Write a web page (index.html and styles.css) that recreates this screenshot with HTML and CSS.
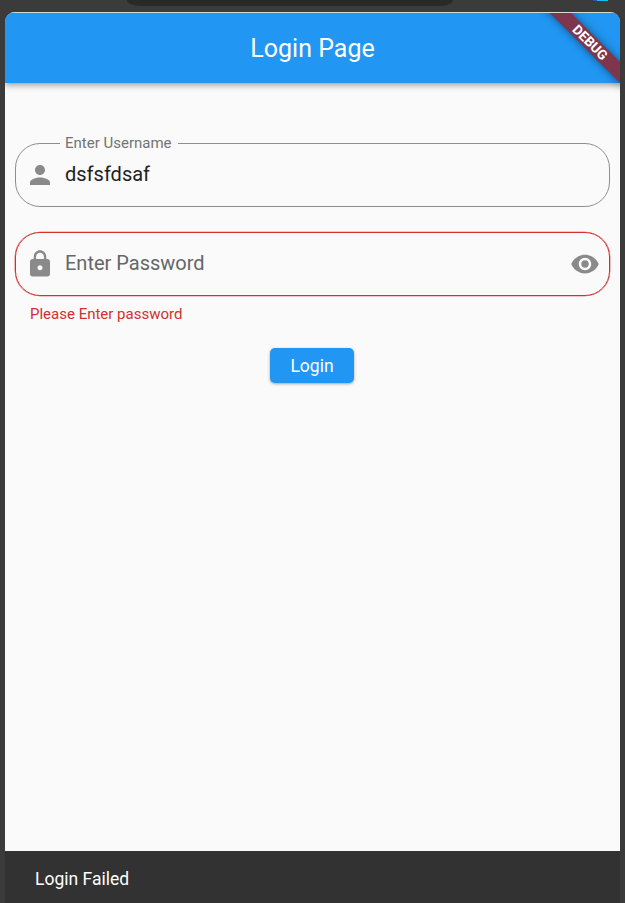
FILE: index.html
```
<!DOCTYPE html>
<html lang="en">
<head>
<meta charset="utf-8">
<title>Login Page</title>
<link rel="stylesheet" href="styles.css">
</head>
<body>
<div class="tabstrip"><span class="tab"></span><span class="tab-icon"></span></div>
<div class="app">
  <header class="appbar">
    <h1 class="title">Login Page</h1>
    <div class="banner-clip"><div class="banner">DEBUG</div></div>
  </header>
  <main class="form">
    <fieldset class="field named">
      <legend class="label">Enter Username</legend>
      <div class="row">
        <svg class="icon" viewBox="0 0 24 24"><path d="M12 12c2.21 0 4-1.79 4-4s-1.79-4-4-4-4 1.79-4 4 1.79 4 4 4zm0 2c-2.67 0-8 1.34-8 4v2h16v-2c0-2.66-5.33-4-8-4z"/></svg>
        <span class="value">dsfsfdsaf</span>
      </div>
    </fieldset>
    <div class="field invalid">
      <div class="row">
        <svg class="icon" viewBox="0 0 24 24"><path d="M18 8h-1V6c0-2.76-2.24-5-5-5S7 3.24 7 6v2H6c-1.1 0-2 .9-2 2v10c0 1.1.9 2 2 2h12c1.1 0 2-.9 2-2V10c0-1.1-.9-2-2-2zm-6 9c-1.1 0-2-.9-2-2s.9-2 2-2 2 .9 2 2-.9 2-2 2zm3.1-9H8.900V6c0-1.71 1.390-3.100 3.100-3.100s3.100 1.390 3.100 3.100v2z"/></svg>
        <span class="value hint">Enter Password</span>
        <svg class="icon" viewBox="0 0 24 24"><path d="M12 4.500C7 4.500 2.730 7.610 1 12c1.730 4.390 6 7.500 11 7.500s9.270-3.110 11-7.500c-1.730-4.390-6-7.500-11-7.500zM12 17c-2.760 0-5-2.240-5-5s2.240-5 5-5 5 2.240 5 5-2.240 5-5 5zm0-8c-1.660 0-3 1.340-3 3s1.340 3 3 3 3-1.340 3-3-1.340-3-3-3z"/></svg>
      </div>
    </div>
    <p class="error">Please Enter password</p>
    <button class="login" type="button">Login</button>
  </main>
  <footer class="snackbar">Login Failed</footer>
</div>
</body>
</html>
```
FILE: styles.css
```
* { box-sizing: border-box; }
body {
  margin: 0;
  height: 903px;
  overflow: hidden;
  display: flex;
  flex-direction: column;
  background: #3b3b3b;
  font-family: Roboto, "Liberation Sans", sans-serif;
}
.tabstrip {
  height: 12px;
  display: flex;
  align-items: flex-start;
}
.tab {
  width: 326px;
  height: 6px;
  margin-left: 127px;
  border-radius: 0 0 14px 14px / 0 0 6px 6px;
  background: #292929;
}
.tab-icon {
  width: 15px;
  height: 1px;
  margin-left: 140px;
  background: linear-gradient(90deg, #2450c8 4px, #16bdf0 4px);
}
.app {
  height: 891px;
  margin: 0 5px;
  display: flex;
  flex-direction: column;
  overflow: hidden;
  border-radius: 10px 10px 0 0;
  background: #fafafa;
}
.appbar {
  position: relative;
  z-index: 1;
  flex: none;
  height: 71px;
  border-top: 1px solid #d9d9d3;
  display: flex;
  align-items: center;
  justify-content: center;
  background: #2196f3;
  box-shadow: 0 2px 5px rgba(0, 0, 0, .28), 0 5px 6px rgba(0, 0, 0, .08);
}
.title {
  margin: 0;
  padding-top: 2px;
  font-size: 25px;
  font-weight: 400;
  line-height: 30px;
  color: #fff;
}
.banner-clip {
  position: absolute;
  top: 0;
  right: 0;
  width: 110px;
  height: 82px;
  overflow: hidden;
}
.banner {
  position: absolute;
  top: 21.500px;
  right: -30px;
  width: 120px;
  height: 15px;
  transform: rotate(45deg);
  background: #7d364c;
  box-shadow: 0 0 8px rgba(0, 0, 0, .45);
  color: #fff;
  font-size: 13.500px;
  font-weight: 700;
  line-height: 15px;
  text-align: center;
}
.form {
  flex: 1;
  display: flex;
  flex-direction: column;
  padding: 51px 10px 0;
}
.field {
  height: 64px;
  min-width: 0;
  margin: 0;
  padding: 0 10px;
  border: 1.250px solid #8e8e8e;
  border-radius: 25px;
}
.named { height: 73px; }
.label {
  height: 18px;
  margin-left: 34px;
  padding: 0 6px 0 5px;
  font-size: 15px;
  line-height: 18px;
  color: #737373;
}
.row {
  height: 62px;
  display: flex;
  align-items: center;
}
.named .row { margin-top: -8px; }
.icon {
  flex: none;
  width: 30px;
  height: 30px;
  margin-right: -1px;
  fill: #8a8a8a;
}
.icon:first-child { margin: 0 9px 0 -1px; }
.value {
  flex: 1;
  padding: 0 1px 2px;
  font-size: 20px;
  line-height: 24px;
  color: #212121;
}
.hint { color: #666; }
.invalid {
  margin-top: 25px;
  border-color: #d32f2f;
  box-shadow: 0 0 0 .3px #d32f2f;
}
.error {
  margin: 9px 15px 0;
  font-size: 15px;
  line-height: 18px;
  color: #d32f2f;
}
.login {
  align-self: center;
  width: 84px;
  height: 35px;
  margin-top: 25px;
  margin-right: 1px;
  padding: 1px 0 0;
  border: 0;
  border-radius: 5px;
  background: #2196f3;
  box-shadow: 0 1px 3px rgba(0, 0, 0, .35);
  color: #fff;
  font: 400 17.500px/34px Roboto, "Liberation Sans", sans-serif;
}
.snackbar {
  flex: none;
  height: 52px;
  padding: 18px 30px 0;
  background: #323232;
  color: #fff;
  font-size: 17.500px;
  line-height: 21px;
}
```
